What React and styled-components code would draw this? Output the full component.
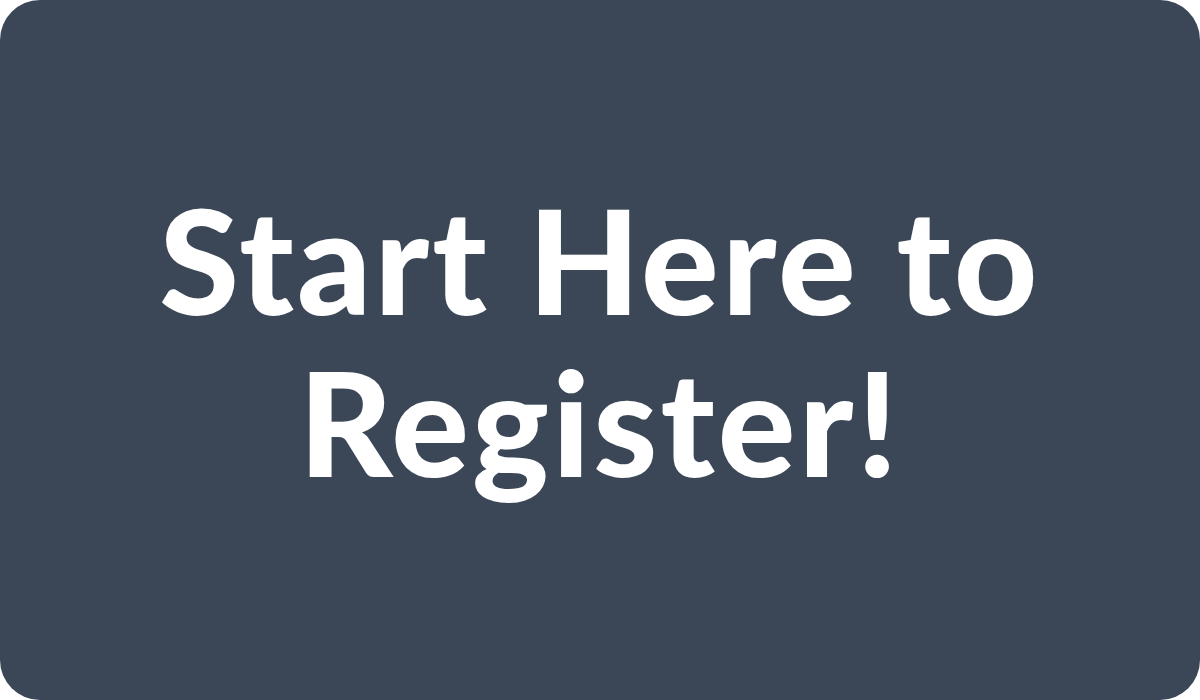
import React from 'react'
import styled, { createGlobalStyle } from 'styled-components'

const GlobalStyle = createGlobalStyle`
  html, body {
    margin: 0;
    padding: 0;
    background: #ffffff;
  }
`

const Card = styled.a`
  box-sizing: border-box;
  display: flex;
  align-items: center;
  justify-content: center;
  width: 1200px;
  height: 700px;
  padding-bottom: 20px;
  background-color: #3b4757;
  border-radius: 40px;
  text-decoration: none;
  cursor: pointer;
`

const Label = styled.h1`
  margin: 0;
  color: #ffffff;
  font-family: Lato, "Open Sans", sans-serif;
  font-weight: 900;
  font-size: 145px;
  line-height: 162px;
  letter-spacing: 0.022em;
  text-align: center;
`

const App = () => {
  return (
    <>
      <GlobalStyle />
      <Card href="#register">
        <Label>
          Start Here to
          <br />
          Register!
        </Label>
      </Card>
    </>
  )
}

export default App
